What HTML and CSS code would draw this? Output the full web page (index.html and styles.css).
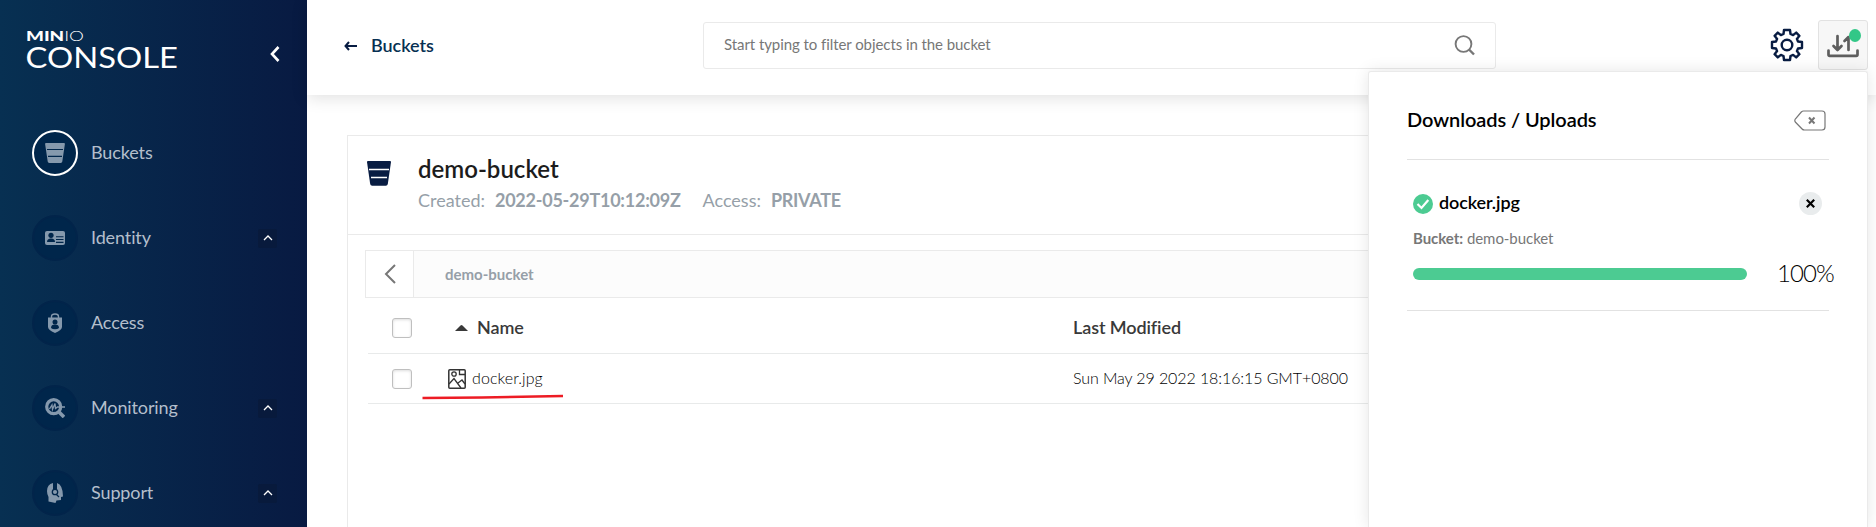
FILE: index.html
```html
<!DOCTYPE html>
<html lang="en">
<head>
<meta charset="utf-8">
<title>MinIO Console</title>
<link rel="stylesheet" href="styles.css">
</head>
<body>
<div class="app">
  <aside class="sidebar">
    <div class="brand">
      <svg class="logo" width="154" height="42" viewBox="0 0 154 42" fill="#fff">
        <text class="logo-bold" x="-1" y="13" textLength="58" lengthAdjust="spacingAndGlyphs">MIN<tspan class="logo-thin">IO</tspan></text>
        <text class="logo-main" x="-1.500" y="40" textLength="152.500" lengthAdjust="spacingAndGlyphs">CONSOLE</text>
      </svg>
      <svg class="collapse" width="12" height="18" viewBox="0 0 12 18" fill="none" stroke="#fff" stroke-width="2.6"><path d="M10.500 2 4 9l6.500 7"/></svg>
    </div>
    <nav class="menu">
      <a class="item active"><span class="disc"><svg width="20" height="20" viewBox="0 0 20 20"><path d="M1 0h18q1 0 .9 1l-2.600 17.600q-.2 1.400-1.600 1.400H4.300q-1.400 0-1.600-1.400L.1 1Q0 0 1 0z" fill="#8599ad"/><path d="M2 6.500h16M3 13.300h14" stroke="#00264b" stroke-width="1.200"/></svg></span><span class="label">Buckets</span></a>
      <a class="item"><span class="disc"><svg width="20" height="20" viewBox="0 0 20 20"><rect y="3" width="20" height="14" rx="2" fill="#8599ad"/><g fill="#00264b"><circle cx="6" cy="7.300" r="2.600"/><path d="M2 14q0-3.600 4-3.600t4 3.600z"/><path d="M11 8.200h7.500v1.100H11zM11 11h7.500v1.100H11zM11 13.800h7.500v1.100H11z"/></g></svg></span><span class="label">Identity</span><span class="expand"><svg width="10" height="6" viewBox="0 0 10 6"><path d="m1 5 4-4 4 4"/></svg></span></a>
      <a class="item"><span class="disc"><svg width="20" height="20" viewBox="0 0 20 20"><path d="M6.500 6V3.500q0-2.500 3.500-2.500t3.500 2.500V6" fill="none" stroke="#8599ad" stroke-width="1.400"/><path d="M3 4.500h14V14q0 3-7 6-7-3-7-6z" fill="#8599ad"/><g fill="#00264b"><circle cx="10" cy="9" r="2.500"/><path d="M6 15q0-3.400 4-3.400T14 15q-1.500 1.300-4 1.300T6 15z"/></g></svg></span><span class="label">Access</span></a>
      <a class="item"><span class="disc"><svg width="20" height="20" viewBox="0 0 20 20" fill="none" stroke="#8599ad"><circle cx="8.700" cy="8.700" r="7" stroke-width="3.200"/><path d="m14 14 5 5" stroke-width="3.600"/><path d="m4.500 11 2.500-4 .5 4.500 2.500-6 .5 5 2-1.500h7.500" stroke-width="1.300"/></svg></span><span class="label">Monitoring</span><span class="expand"><svg width="10" height="6" viewBox="0 0 10 6"><path d="m1 5 4-4 4 4"/></svg></span></a>
      <a class="item"><span class="disc"><svg width="20" height="20" viewBox="0 0 20 20"><path d="M8 0Q2 1.500 2 8q0 3.500 1.500 6v4.500l7 1.500 1-2.500 4.500-.5v-3l2-.5Q18 2 12 0v8H8z" fill="#8599ad"/><circle cx="10" cy="9" r="2.700" fill="#8599ad" stroke="#00264b" stroke-width="1.300"/><path d="m11.500 11.500 2.500 2.500" stroke="#00264b" stroke-width="1.200"/></svg></span><span class="label">Support</span><span class="expand"><svg width="10" height="6" viewBox="0 0 10 6"><path d="m1 5 4-4 4 4"/></svg></span></a>
    </nav>
  </aside>

  <main class="main">
    <header class="topbar">
      <a class="back"><svg width="14" height="10" viewBox="0 0 14 10" fill="none" stroke="#081c42" stroke-width="2"><path d="M5 1 1.500 5 5 9M1.500 5H13"/></svg><span class="back-label">Buckets</span></a>
      <div class="search"><span class="search-text">Start typing to filter objects in the bucket</span><svg width="21" height="21" viewBox="0 0 21 21" fill="none" stroke="#777"><circle cx="9.500" cy="9" r="7.900" stroke-width="1.900"/><path d="m15 14.500 5 5" stroke-width="2.400"/></svg></div>
      <svg class="gear" width="34" height="34" viewBox="-17 -17 34 34" fill="none" stroke="#081c42" stroke-width="2.400" stroke-linejoin="round"><circle r="5.300"/><path d="M-3-15H3L3.500-11 6.100-9.900 9.200-12.400 12.400-9.200 9.900-6.100 11-3.500 15-3V3L11 3.500 9.900 6.100 12.400 9.200 9.200 12.400 6.100 9.900 3.500 11 3 15H-3L-3.500 11-6.100 9.900-9.200 12.400-12.400 9.200-9.900 6.100-11 3.500-15 3V-3L-11-3.500-9.900-6.100-12.400-9.200-9.200-12.400-6.100-9.900-3.500-11z"/></svg>
      <div class="transfer">
        <svg width="32" height="24" viewBox="0 0 32 24" fill="none" stroke="#5e5e5e" stroke-width="2.700" stroke-linecap="round" stroke-linejoin="round"><path d="M1.500 16.500v4q0 1.300 1.300 1.300h26.400q1.300 0 1.300-1.300v-4M10.500 2v13M6.500 12l4 4 4-4M21.500 16V3l-4 4"/></svg>
        <span class="dot"></span>
      </div>
    </header>

    <section class="card">
      <div class="card-head">
        <svg width="24" height="25" viewBox="0 0 24 25"><path d="M1 0h22q1.100 0 1 1.100L20.800 23q-.3 1.700-2 1.700H5.200q-1.700 0-2-1.700L0 1.100Q-.1 0 1 0z" fill="#081c42"/><path d="M2 8.500h20M4 16.500h16" stroke="#fff" stroke-width="1.700"/></svg>
        <div class="head-text">
          <h1 class="title">demo-bucket</h1>
          <p class="meta"><span class="created">Created:</span><b class="stamp">2022-05-29T10:12:09Z</b><span class="access">Access:</span><b class="private">PRIVATE</b></p>
        </div>
      </div>
      <div class="crumbs">
        <span class="crumb-back"><svg width="12" height="20" viewBox="0 0 12 20" fill="none" stroke="#777" stroke-width="2"><path d="M11 1 2 10l9 9"/></svg></span>
        <span class="crumb">demo-bucket</span>
      </div>
      <div class="table">
        <div class="row row-head">
          <span class="check"></span>
          <span class="cell-name"><svg class="sort" width="13" height="6" viewBox="0 0 13 6"><path d="M0 6 5.500.4q1-.8 2 0L13 6z" fill="#393939"/></svg><span class="name-head">Name</span></span>
          <span class="date-head">Last Modified</span>
        </div>
        <div class="row">
          <span class="check"></span>
          <span class="cell-file"><svg width="18" height="20" viewBox="0 0 18 20" fill="none" stroke="#333" stroke-width="1.300"><rect x=".8" y=".8" width="16.400" height="18.400" rx="1" stroke-width="1.500"/><circle cx="6" cy="5" r="2.200"/><path d="M11.500 1v4.500H17M1 15l5-5.500 7 9.500M10 14l4-3 3 4"/></svg><span class="file">docker.jpg</span></span>
          <span class="date">Sun May 29 2022 18:16:15 GMT+0800</span>
          <svg class="mark" width="142" height="6" viewBox="0 0 142 6"><path d="M.5 4 60 3.500 141 2" fill="none" stroke="#ed1c24" stroke-width="2.500"/></svg>
        </div>
      </div>
    </section>

    <section class="panel">
      <div class="panel-head">
        <h2 class="panel-title">Downloads / Uploads</h2>
        <svg width="32" height="21" viewBox="0 0 32 21" fill="none" stroke="#777" stroke-width="1.200"><path d="M9.500 1H28q3 0 3 3v13q0 3-3 3H10.500q-1.500 0-2.400-1L1.300 12q-1-1.500 0-3l6-7Q8.300 1 9.500 1z"/><path d="m15 7.500 5.500 6M20.500 7.500l-5.500 6" stroke-width="2"/></svg>
      </div>
      <div class="job">
        <div class="job-top">
          <svg width="20" height="20" viewBox="0 0 20 20"><circle cx="10" cy="10" r="10" fill="#4ccb92"/><path d="m4.500 10 4 4L15.300 6" fill="none" stroke="#fff" stroke-width="2.200"/></svg>
          <span class="job-name">docker.jpg</span>
          <span class="close"><svg width="9" height="9" viewBox="0 0 9 9"><path d="m.8.8 7.400 7.400M8.200.8.8 8.200" stroke="#000" stroke-width="2.200"/></svg></span>
        </div>
        <div class="job-bucket"><b>Bucket:</b> demo-bucket</div>
        <div class="job-progress"><span class="bar"></span><span class="percent">100%</span></div>
      </div>
    </section>
  </main>
</div>
</body>
</html>
```
FILE: styles.css
```css
* { box-sizing: border-box; }
body { margin: 0; font-family: Lato, "Liberation Sans", sans-serif; background: #fff; overflow: hidden; }
h1, h2, p { margin: 0; }
svg { display: block; flex: none; }
span, b, h1, h2 { white-space: nowrap; }
.app { display: flex; height: 527px; overflow: hidden; }

.sidebar { width: 307px; flex: none; background: linear-gradient(90deg, #073052 0%, #081a42 100%); }
.brand { display: flex; justify-content: space-between; height: 130px; padding: 28px 27px 0; }
.logo { overflow: visible; }
.logo-bold { font-size: 13.500px; font-weight: 900; }
.logo-thin { font-weight: 300; }
.logo-main { font-size: 29px; font-weight: 400; }
.collapse { margin-top: 17px; }
.menu { display: flex; flex-direction: column; gap: 39px; padding: 0 30px 0 32px; }
.item { display: flex; align-items: center; height: 46px; color: #b4bfcc; font-size: 18px; letter-spacing: -.12px; }
.disc { display: flex; align-items: center; justify-content: center; width: 46px; height: 46px; border: 2px solid #02244a; border-radius: 50%; background: #00264b; }
.active .disc { border-color: #fff; }
.label { margin-left: 13px; padding-bottom: 2px; line-height: 24px; }
.expand { display: flex; align-items: center; justify-content: center; width: 19px; height: 19px; margin-left: auto; border-radius: 2px; background: #081a3c; }
.expand path { fill: none; stroke: #fff; stroke-width: 1.300; }

.main { position: relative; flex: 1; min-width: 0; }
.topbar { display: flex; height: 95px; padding-left: 37px; background: #fff; box-shadow: 0 3px 16px rgba(0,0,0,.12); }
.back { display: flex; align-items: center; width: 359px; height: 91px; color: #073052; font-size: 18px; font-weight: 600; }
.back-label { margin-left: 13px; padding-bottom: 2px; letter-spacing: -.05px; }
.search { display: flex; align-items: center; justify-content: space-between; width: 793px; height: 47px; margin-top: 22px; padding: 0 20px; border: 1px solid #eaeaea; border-radius: 3px; color: #777; font-size: 15px; letter-spacing: -.07px; }
.search-text { padding-bottom: 3px; }
.gear { margin: 28px 0 0 274px; }
.transfer { position: relative; width: 50px; height: 50px; margin: 20px 0 0 14px; padding: 13px 8px; border: 1px solid #e2e2e2; border-radius: 3px; background: #f7f7f7; }
.dot { position: absolute; top: 8px; right: 6px; width: 12px; height: 13px; border-radius: 50%; background: #32c787; }

.card { height: 392px; margin: 40px 9px 0 40px; border: 1px solid #eaeaea; border-bottom: 0; }
.card-head { display: flex; height: 99px; padding: 25px 0 0 19px; border-bottom: 1px solid #eaeaea; }
.head-text { margin: -8px 0 0 27px; }
.title { color: #1c1c1c; font-size: 24px; font-weight: 600; line-height: 32px; }
.meta { display: flex; color: #969fa8; font-size: 18px; line-height: 30px; }
.stamp { margin-left: 10px; letter-spacing: -.25px; }
.access { margin-left: 22px; }
.private { margin-left: 10px; letter-spacing: -.3px; }
.crumbs { display: flex; height: 48px; margin: 15px 17px 0; border: 1px solid #eaeaea; background: #fcfcfc; }
.crumb-back { display: flex; align-items: center; justify-content: center; width: 48px; border-right: 1px solid #eaeaea; background: #fff; }
.crumb { margin-left: 31px; color: #969fa8; font-size: 15px; font-weight: 700; line-height: 47px; }
.table { margin: 0 17px 0 20px; }
.row { position: relative; display: grid; grid-template-columns: 80px 625px 1fr; align-items: center; height: 50px; border-bottom: 1px solid #e8eaea; color: #000; font-size: 16px; font-weight: 300; }
.row-head { height: 56px; padding-top: 4px; color: #393939; font-size: 18px; font-weight: 600; letter-spacing: -.1px; }
.check { width: 20px; height: 20px; margin-left: 24px; border: 1px solid #bfbfbf; border-radius: 3px; background: #fff; box-shadow: inset 0 1px 3px #ddd; }
.cell-name, .cell-file { display: flex; align-items: center; }
.sort { margin: 0 9px 0 7px; }
.name-head, .date-head, .date, .file { padding-bottom: 2px; }
.date { letter-spacing: -.1px; }
.file { margin-left: 6px; letter-spacing: .08px; }
.mark { position: absolute; left: 54px; top: 40px; }

.panel { position: absolute; left: 1061px; top: 71px; width: 500px; height: 456px; padding: 0 38px; border: 1px solid #eaeaea; border-bottom: 0; border-radius: 3px 3px 0 0; background: #fff; box-shadow: 0 0 16px rgba(0,0,0,.1); }
.panel-head { display: flex; align-items: center; justify-content: space-between; height: 88px; padding: 9px 3px 0 0; border-bottom: 1px solid #e2e2e2; }
.panel-title { padding-bottom: 3px; color: #000; font-size: 20px; font-weight: 600; line-height: 28px; letter-spacing: -.08px; }
.job { height: 151px; padding: 32px 0 0 6px; border-bottom: 1px solid #e2e2e2; }
.job-top { display: flex; align-items: center; height: 23px; padding-right: 7px; }
.job-name { margin-left: 6px; padding-bottom: 3px; color: #000; font-size: 18px; font-weight: 600; letter-spacing: -.1px; }
.close { display: flex; align-items: center; justify-content: center; width: 23px; height: 23px; margin-left: auto; border-radius: 50%; background: #e9eced; }
.job-bucket { margin-top: 13px; color: #777; font-size: 15px; line-height: 20px; letter-spacing: -.05px; }
.job-progress { display: flex; align-items: center; height: 30px; margin-top: 11px; }
.bar { width: 334px; height: 12px; flex: none; border-radius: 6px; background: #4ccb92; }
.percent { margin-left: 30px; padding-bottom: 3px; color: #000; font-size: 24px; font-weight: 300; letter-spacing: -.9px; }
```
